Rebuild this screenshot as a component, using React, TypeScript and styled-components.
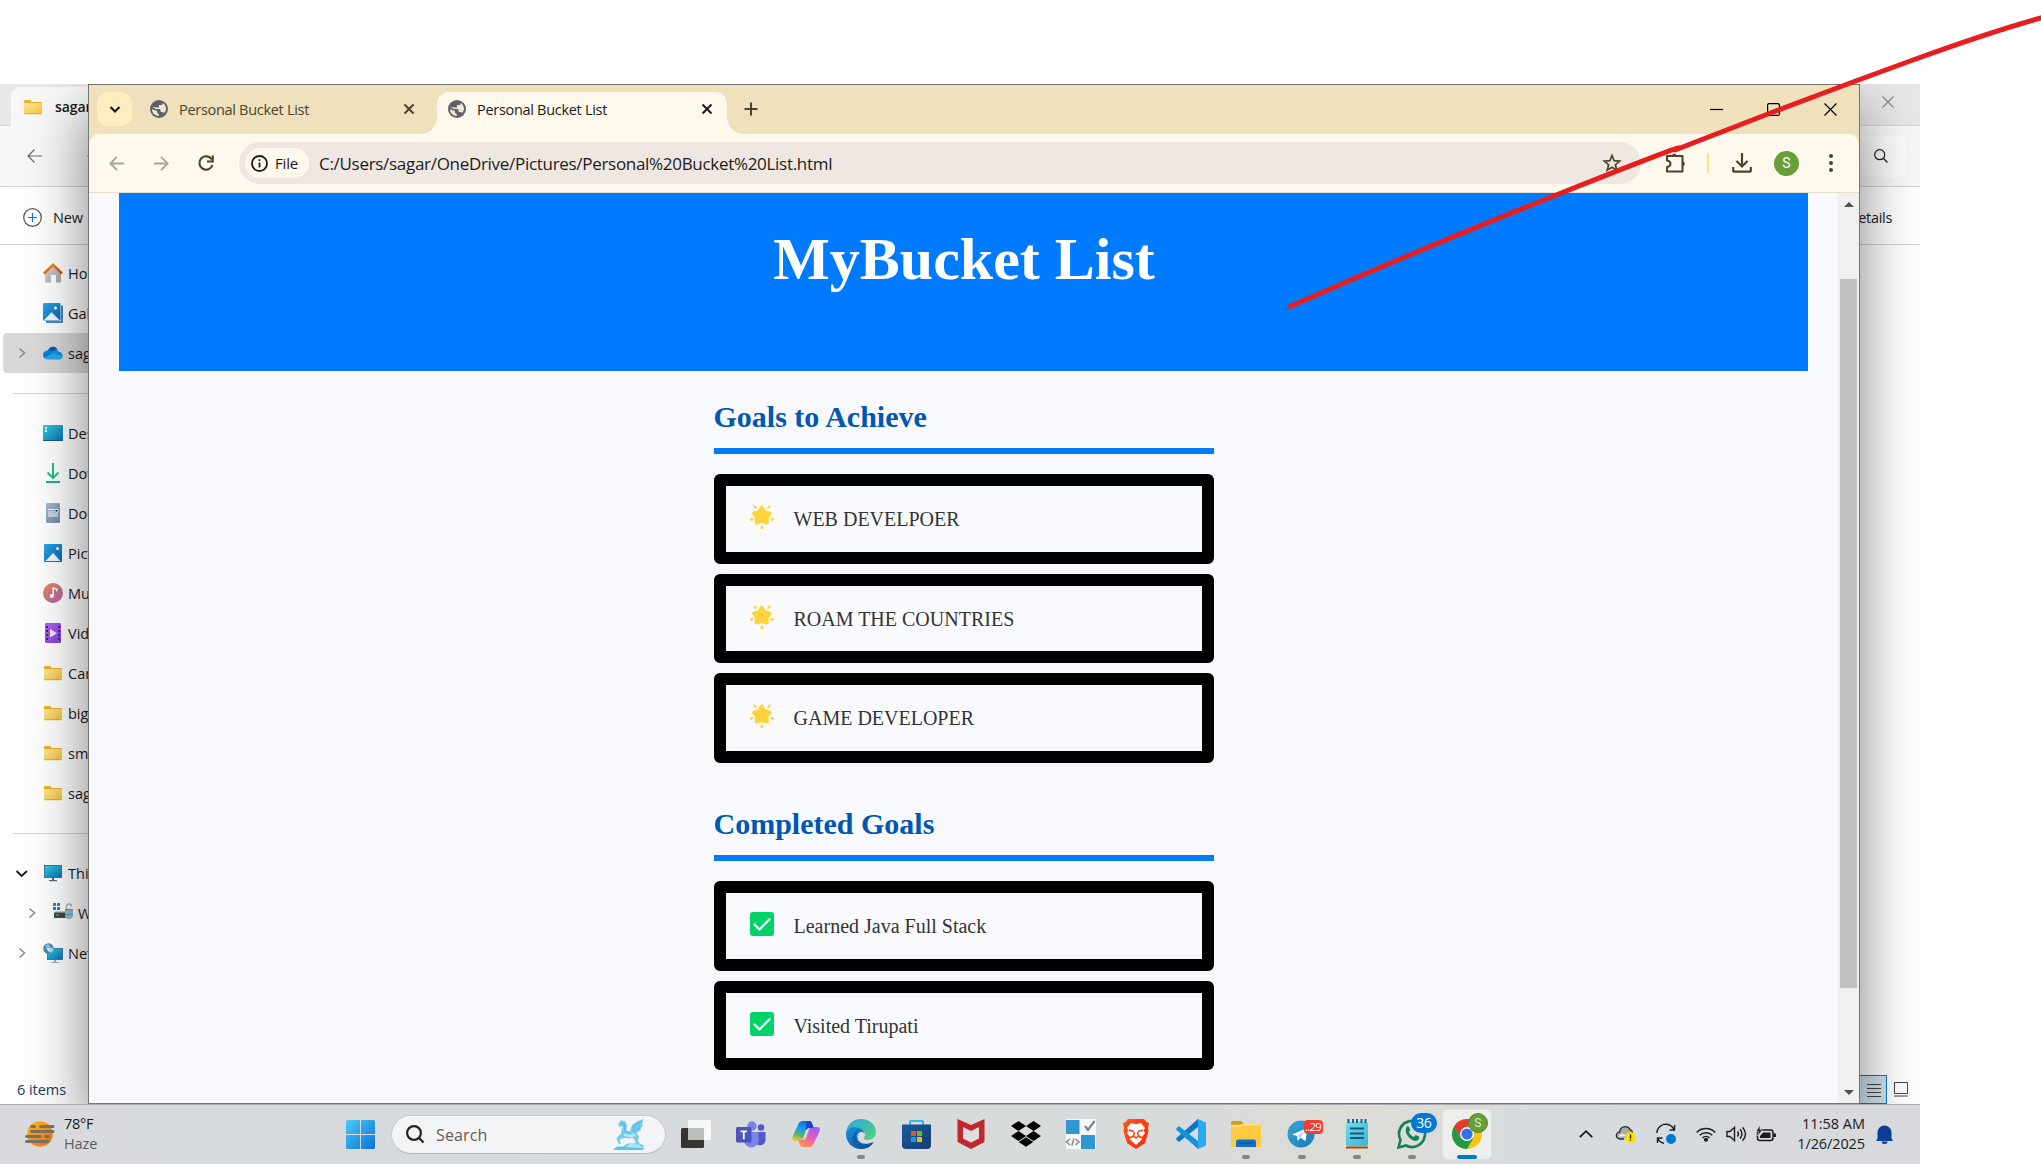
import React from "react";
import styled, { createGlobalStyle, css } from "styled-components";

const Global = createGlobalStyle`
  html, body { margin: 0; padding: 0; background: #fff; }
  body { width: 2041px; height: 1164px; overflow: hidden; font-family: "Open Sans", "Noto Sans", sans-serif; }
  * { box-sizing: border-box; }
  svg { display: block; flex: none; overflow: visible; }
`;

/* ---------- shared ---------- */
const Screen = styled.div`
  position: relative;
  width: 2041px;
  height: 1164px;
  padding-top: 84px;
  overflow: hidden;
`;
const Desktop = styled.div`
  position: relative;
  width: 1920px;
  height: 1080px;
  overflow: hidden;
  display: flex;
  flex-direction: column;
`;
const Label = styled.span<{ $size?: number; $ls?: number; $color?: string; $weight?: number }>`
  font-size: ${(p) => p.$size ?? 14.5}px;
  letter-spacing: ${(p) => p.$ls ?? -0.3}px;
  color: ${(p) => p.$color ?? "#1b1b1b"};
  font-weight: ${(p) => p.$weight ?? 400};
  line-height: 20px;
  white-space: nowrap;
`;
const Stroke = styled.svg<{ $w?: number; $c?: string }>`
  fill: none;
  stroke: ${(p) => p.$c ?? "#1b1b1b"};
  stroke-width: ${(p) => p.$w ?? 1.4};
`;

/* ---------- file explorer ---------- */
const Explorer = styled.div`
  height: 1020px;
  background: #fff;
  display: flex;
  flex-direction: column;
`;
const ExTitle = styled.div`
  height: 42px;
  background: #e8e8e8;
  border-bottom: 1px solid #d4d4d4;
  display: flex;
  justify-content: space-between;
`;
const ExTab = styled.div`
  width: 300px;
  height: 42px;
  margin: 3px 0 0 11px;
  padding: 0 0 2px 12px;
  border-radius: 9px 9px 0 0;
  background: #f8f8f8;
  display: flex;
  align-items: center;
  gap: 12px;
`;
const ExClose = styled.div`
  width: 64px;
  height: 36px;
  display: flex;
  align-items: center;
  justify-content: center;
`;
const ExNav = styled.div`
  height: 61px;
  background: #f8f8f8;
  border-bottom: 1px solid #d2d2d2;
  display: flex;
  align-items: center;
  justify-content: space-between;
  padding: 0 14px 0 27px;
`;
const ExArrows = styled.div`
  display: flex;
  gap: 45px;
`;
const ExSearch = styled.div`
  width: 300px;
  height: 41px;
  border-radius: 6px;
  background: #fdfdfd;
  display: flex;
  align-items: center;
  justify-content: flex-end;
  padding-right: 18px;
`;
const ExCommands = styled.div`
  height: 58px;
  border-bottom: 1px solid #d2d2d2;
  display: flex;
  align-items: center;
  justify-content: space-between;
  padding: 4px 28px 0 23px;
`;
const ExNew = styled.div`
  display: flex;
  align-items: center;
  gap: 11px;
`;
const ExSide = styled.div`
  flex: 1;
  width: 320px;
  padding-top: 8px;
  display: flex;
  flex-direction: column;
`;
const SideRow = styled.div<{ $on?: boolean; $in?: number }>`
  height: 40px;
  margin-left: 3px;
  padding-left: ${(p) => p.$in ?? 0}px;
  border-radius: 4px;
  display: flex;
  align-items: center;
  gap: 5px;
  ${(p) => p.$on && css`background: #d9d9d9;`}
`;
const SideText = styled(Label)`
  padding-top: 1px;
`;
const Chev = styled.div`
  width: 35px;
  height: 20px;
  display: flex;
  align-items: center;
  padding-left: 12px;
`;
const SideRule = styled.div`
  height: 40px;
  margin-left: 13px;
  display: flex;
  align-items: center;
  &::before { content: ""; flex: 1; height: 1px; background: #d5d5d5; }
`;
const ExStatus = styled.div`
  height: 29px;
  display: flex;
  align-items: center;
  justify-content: space-between;
  padding-left: 17px;
`;
const ViewButtons = styled.div`
  display: flex;
  align-items: center;
`;
const ViewButton = styled.div<{ $on?: boolean }>`
  width: ${(p) => (p.$on ? 31 : 33)}px;
  height: 29px;
  display: flex;
  align-items: center;
  padding-left: ${(p) => (p.$on ? 10 : 7)}px;
  ${(p) => p.$on && css`background: #cfe3ef; border: 1px solid #0a78c8;`}
`;

/* ---------- browser ---------- */
const Browser = styled.div`
  position: absolute;
  left: 88px;
  top: 0;
  width: 1772px;
  height: 1020px;
  border: 1px solid #757575;
  background: #fff9ed;
  box-shadow: 0 26px 56px rgba(0, 0, 0, 0.5);
  display: flex;
  flex-direction: column;
`;
const TabStrip = styled.div`
  height: 49px;
  background: #eee1bb;
  display: flex;
  align-items: flex-end;
`;
const TabMenu = styled.div`
  width: 35px;
  height: 34px;
  margin: 0 0 8px 8px;
  border-radius: 11px;
  background: #fdedc0;
  display: flex;
  align-items: center;
  justify-content: center;
`;
const Tab = styled.div<{ $active?: boolean }>`
  position: relative;
  width: ${(p) => (p.$active ? 290 : 305)}px;
  height: 42px;
  padding: 0 ${(p) => (p.$active ? 15 : 23)}px 8px ${(p) => (p.$active ? 11 : 18)}px;
  display: flex;
  align-items: center;
  gap: 11px;
  ${(p) =>
    p.$active &&
    css`
      background: #fff9ed;
      border-radius: 12px 12px 0 0;
      &::before, &::after {
        content: "";
        position: absolute;
        bottom: 0;
        width: 16px;
        height: 16px;
      }
      &::before { left: -16px; background: radial-gradient(circle at 0 0, #eee1bb 15.5px, #fff9ed 16px); }
      &::after { right: -16px; background: radial-gradient(circle at 100% 0, #eee1bb 15.5px, #fff9ed 16px); }
    `}
`;
const TabTitle = styled(Label)`
  flex: 1;
  padding-top: 1px;
`;
const NewTab = styled.div`
  margin: 0 0 18px 17px;
`;
const Caption = styled.div`
  margin: 0 22px 18px auto;
  display: flex;
  gap: 44px;
  align-items: center;
`;
const ToolbarBack = styled.div`
  background: #eee1bb;
`;
const Toolbar = styled.div`
  height: 59px;
  background: #fff9ed;
  border-bottom: 1px solid #eadfca;
  border-radius: 11px 11px 0 0;
  display: flex;
  align-items: center;
  padding: 0 22px 0 20px;
`;
const NavGroup = styled.div`
  display: flex;
  gap: 29.5px;
  width: 130px;
  align-items: center;
`;
const Omnibox = styled.div`
  width: 1402px;
  height: 42px;
  border-radius: 21px;
  background: #efe8e2;
  padding: 0 19px 0 6px;
  display: flex;
  align-items: center;
`;
const Chip = styled.div`
  width: 64px;
  height: 30px;
  border-radius: 15px;
  background: #fff9ed;
  display: flex;
  align-items: center;
  gap: 7px;
  padding-left: 6px;
  margin-right: 10px;
`;
const Url = styled(Label)`
  flex: 1;
  padding-top: 1px;
`;
const Actions = styled.div`
  flex: 1;
  display: flex;
  align-items: center;
  padding-left: 24px;
`;
const Divider = styled.div`
  width: 2px;
  height: 20px;
  background: #fbe283;
  margin: 0 23px 0 20px;
`;
const Avatar = styled.div`
  width: 25px;
  height: 25px;
  margin: 0 30px 0 22px;
  border-radius: 50%;
  background: #689f38;
  color: #fff;
  font: 14px/25px Roboto, sans-serif;
  text-align: center;
`;

const Viewport = styled.div`
  flex: 1;
  display: flex;
  background: #f8f9fc;
  min-height: 0;
`;
const PageBody = styled.div`
  flex: 1;
  padding: 0 30px;
  display: flex;
  flex-direction: column;
  align-items: center;
  font-family: "Liberation Serif", "Times New Roman", serif;
`;
const Hero = styled.div`
  width: 100%;
  height: 178px;
  background: #007bff;
  display: flex;
  justify-content: center;
  padding: 31px 0 0 1px;
`;
const HeroTitle = styled.h1`
  margin: 0;
  font-size: 60px;
  line-height: 70px;
  font-weight: 700;
  color: #fff;
`;
const Section = styled.section`
  width: 500px;
  height: 407px;
  padding-top: 27px;
  &:last-child { height: auto; }
`;
const SectionTitle = styled.h2`
  margin: 0 0 20.25px;
  height: 56px;
  border-bottom: 6px solid #007bff;
  font-size: 30px;
  line-height: 38px;
  font-weight: 700;
  color: #0056b3;
`;
const Goal = styled.div`
  height: 89.5px;
  margin-bottom: 10px;
  border: 12px solid #000;
  border-radius: 6px;
  background: #f9fafd;
  display: flex;
  padding: 19px 24px 0;
  gap: 20px;
`;
const GoalText = styled.span`
  margin-top: 1px;
  font-size: 20px;
  line-height: 27px;
  color: #333;
`;

const Scroll = styled.div`
  width: 21px;
  background: #f0f0f1;
  display: flex;
  flex-direction: column;
  align-items: center;
  justify-content: space-between;
  padding: 9px 0 8px;
`;
const Thumb = styled.div`
  width: 17px;
  height: 709px;
  margin: 72px 0 auto;
  background: #c1c1c1;
`;

/* ---------- taskbar ---------- */
const Taskbar = styled.div`
  position: relative;
  height: 60px;
  border-top: 1px solid #a8a9ab;
  background: linear-gradient(90deg, #d8dadd 0%, #d7dbdd 45%, #d8dbdb 62%, #dedcd5 71%, #d7dbdf 80%, #d8d9dc 100%);
  display: flex;
  align-items: center;
  padding-bottom: 1px;
`;
const Weather = styled.div`
  width: 321px;
  margin-left: 25px;
  display: flex;
  align-items: center;
  gap: 9px;
`;
const Stack = styled.div<{ $right?: boolean }>`
  display: flex;
  flex-direction: column;
  text-align: ${(p) => (p.$right ? "right" : "left")};
`;
const SearchPill = styled.div`
  width: 275px;
  height: 39px;
  margin: 0 2px 0 16px;
  padding: 0 21px 0 14px;
  border: 1px solid #c8cacb;
  border-bottom-color: #b4b6b8;
  border-radius: 20px;
  background: #f3f4f5;
  display: flex;
  align-items: center;
  gap: 12px;
`;
const PillText = styled(Label)`
  flex: 1;
  padding-top: 1px;
`;
const Apps = styled.div`
  display: grid;
  grid-template-columns: repeat(15, 55.1px);
`;
const AppButton = styled.div<{ $on?: boolean }>`
  position: relative;
  justify-self: center;
  width: 48px;
  height: 49px;
  border-radius: 5px;
  display: flex;
  align-items: center;
  justify-content: center;
  padding-bottom: 1px;
  ${(p) => p.$on && css`background: #eeeeed; box-shadow: 0 0 0 1px #e2e2e0;`}
`;
const Running = styled.i<{ $on?: boolean }>`
  position: absolute;
  bottom: 0;
  left: ${(p) => (p.$on ? 14 : 20)}px;
  width: ${(p) => (p.$on ? 20 : 8)}px;
  height: 4px;
  border-radius: 2px;
  background: ${(p) => (p.$on ? "#0078d4" : "#858585")};
`;
const Badge = styled.b<{ $kind: "tg" | "wa" | "ch" }>`
  position: absolute;
  font-weight: 400;
  color: #fff;
  text-align: center;
  ${(p) =>
    p.$kind === "tg" &&
    css`left: 26px; top: 10px; width: 19px; height: 14px; border-radius: 4px; background: #f23c34; font-size: 11.5px; line-height: 14px; letter-spacing: -0.8px;`}
  ${(p) =>
    p.$kind === "wa" &&
    css`left: 23px; top: 3px; width: 26px; height: 20px; border-radius: 10px; background: #0078d4; font-size: 14px; line-height: 20px; letter-spacing: -0.6px;`}
  ${(p) =>
    p.$kind === "ch" &&
    css`left: 25px; top: 3px; width: 20px; height: 20px; border-radius: 10px; background: #689f38; border: 1px solid #57852f; color: #dce9c8; font: 12px/18px Roboto, sans-serif;`}
`;
const Tray = styled.div`
  margin-left: auto;
  padding-right: 27px;
  display: flex;
  align-items: center;
`;
const TraySlot = styled.div<{ $w: number }>`
  width: ${(p) => p.$w}px;
  height: 24px;
  display: flex;
  align-items: center;
  justify-content: center;
`;
const Clock = styled(Stack)`
  width: 79px;
  margin-right: 11px;
  align-items: flex-end;
`;

const Ink = styled.svg`
  position: absolute;
  left: 0;
  top: 0;
  pointer-events: none;
`;
const HiddenDefs = styled.svg`
  position: absolute;
  width: 0;
  height: 0;
`;

/* ---------- icons ---------- */
const Defs = () => (
  <HiddenDefs>
    <defs>
      {[
        ["fold", "#fde79a", "#f8c43c"],
        ["blue", "#2fa8e8", "#0a62b8"],
        ["teal", "#2fd4dc", "#0d6dbb"],
        ["grey", "#d8d8d8", "#a5a5a5"],
        ["roof", "#f79423", "#d34b12"],
        ["doc", "#a9bed2", "#6c88a6"],
        ["music", "#f08a52", "#a763b8"],
        ["video", "#b266f2", "#8040d8"],
        ["sun", "#fdb813", "#ef6c0a"],
        ["win", "#4cc8f8", "#0a74d4"],
        ["store", "#145a9c", "#1b3e6f"],
        ["edge1", "#2ea5e8", "#55d672"],
        ["edge2", "#1c8fdc", "#0f4f9c"],
        ["brave", "#ff5a1c", "#ff2000"],
        ["tg", "#35a8dc", "#1878b4"],
        ["note", "#74dbee", "#38b4d4"],
      ].map(([id, a, b]) => (
        <linearGradient key={id} id={id} x1="0" y1="0" x2="1" y2="1">
          <stop offset="0" stopColor={a} />
          <stop offset="1" stopColor={b} />
        </linearGradient>
      ))}
      <linearGradient id="cop1" x1="0.6" y1="0" x2="0.3" y2="1">
        <stop offset="0" stopColor="#1c64e4" />
        <stop offset="0.4" stopColor="#1a9ee8" />
        <stop offset="0.7" stopColor="#4cb870" />
        <stop offset="1" stopColor="#f0c83c" />
      </linearGradient>
      <linearGradient id="cop2" x1="0.7" y1="0" x2="0.3" y2="1">
        <stop offset="0" stopColor="#a45cf0" />
        <stop offset="0.5" stopColor="#e85cb4" />
        <stop offset="1" stopColor="#ff9450" />
      </linearGradient>
    </defs>
  </HiddenDefs>
);

const I = ({ w = 20, h = 20, children }: { w?: number; h?: number; children: React.ReactNode }) => (
  <svg width={w} height={h} viewBox={`0 0 ${w} ${h}`}>{children}</svg>
);
const Folder = () => (
  <I>
    <path d="M1 4a1 1 0 0 1 1-1h5.500l1.300 2H18a1 1 0 0 1 1 1V9H1z" fill="#f0b21f" />
    <rect x="1" y="6" width="18" height="10.800" rx=".8" fill="url(#fold)" />
    <path d="M1.400 16.700h17.200" stroke="#e3a41c" strokeWidth="1" />
  </I>
);
const Home = () => (
  <I>
    <path d="M2 9 10 2l8 7v9.500a1 1 0 0 1-1 1h-4V12H8v7.500H2.500L2 18z" fill="url(#grey)" />
    <path d="M1 10.500 10 1.800l9 8.700" fill="none" stroke="url(#roof)" strokeWidth="2.600" />
  </I>
);
const Gallery = () => (
  <I>
    <path d="M3 19h16V2.500" fill="none" stroke="#1564b0" strokeWidth="1.600" />
    <rect width="17.500" height="17.500" rx="1.200" fill="url(#blue)" />
    <path d="m1 17 7.500-7.800L16.500 17z" fill="#eef6fd" />
    <circle cx="12.500" cy="5" r="1.500" fill="#fff" />
  </I>
);
const OneDrive = () => (
  <I>
    <path d="M5 8a5 5 0 0 1 9.500-1.500L11 12H3z" fill="#0a5cb0" />
    <path d="M4.500 7.500a4.500 4.500 0 0 0-2.700 8L12 10.500 7.500 7.800z" fill="#1180d8" />
    <path d="M13 7a4.500 4.500 0 0 1 3 1.700 4 4 0 0 1 3.500 5L12 12l-4-3z" fill="#1490df" />
    <path d="m10 10 9.600 3.500A3.500 3.500 0 0 1 16 16.500H4.500a4.500 4.500 0 0 1-3-1.500z" fill="#28a8ea" />
  </I>
);
const DesktopIcon = () => (
  <I>
    <rect y="2" width="20" height="16" rx="1" fill="url(#teal)" />
    <path d="M0 17h20v.600H0z" fill="#0b3f74" />
    <path d="M2 4h2v2H2zM2 7h2v2H2z" fill="#fff" />
  </I>
);
const DownloadIcon = () => (
  <I>
    <path d="M10 0v15M4.500 9.500 10 15l5.500-5.500" fill="none" stroke="#25bd8d" strokeWidth="2" />
    <path d="M3 18h14v2H3z" fill="#1db092" />
  </I>
);
const DocIcon = () => (
  <I>
    <rect x="3" width="14" height="20" rx="1.200" fill="url(#doc)" />
    <path d="M5 6.500h6M5 9h6M5 11h10M5 13h10M12 6.500h3v2.500h-3z" stroke="#fff" strokeWidth="1" />
  </I>
);
const PicIcon = () => (
  <I>
    <rect x="1" y="1" width="18" height="18" rx="1" fill="url(#blue)" />
    <path d="m2.500 18 7.500-8 7.500 8z" fill="#eef6fd" />
    <circle cx="14.500" cy="5.500" r="1.500" fill="#fff" />
  </I>
);
const MusicIcon = () => (
  <I>
    <circle cx="10" cy="10" r="10" fill="url(#music)" />
    <circle cx="8.800" cy="13" r="2.100" fill="#fff" />
    <path d="M10.200 13V5l3.500 1v2.200" fill="none" stroke="#fff" strokeWidth="1.500" />
  </I>
);
const VideoIcon = () => (
  <I>
    <rect x="2" width="16" height="20" rx="1.200" fill="url(#video)" />
    <path d="M4 3v15M16 3v15" stroke="#43237a" strokeWidth="2" strokeDasharray="2 2" />
    <path d="M7 6v8.500l7-4.250z" fill="#f0eaf8" />
  </I>
);
const PcIcon = () => (
  <I>
    <rect x="1.400" y="2.400" width="17.200" height="12.200" fill="url(#teal)" stroke="#2a6690" strokeWidth=".8" />
    <path d="M9 15h2v2H9zM6 17h8v1.200H6z" fill="#5d6b78" />
  </I>
);
const DriveIcon = () => (
  <I>
    <path d="M0 0h3v3H0zM4 0h3v3H4zM0 4h3v3H0zM4 4h3v3H4z" fill="#1689d8" />
    <path d="M2 8h16v2H2z" fill="#d0d0d0" />
    <rect x="1" y="9.500" width="14" height="5.500" fill="#474747" />
    <circle cx="4.500" cy="12" r="1" fill="#44d860" />
    <path d="M13.500 6V3.500a2.500 2.500 0 0 1 5 0" fill="none" stroke="#a9b2bb" strokeWidth="1.400" />
    <path d="M12 6h8v6a4 4 0 0 1-8 0z" fill="#a6b5c4" />
    <path d="M12 6.500h8M12 11.500h8" stroke="#3aa0e0" />
  </I>
);
const NetIcon = () => (
  <I>
    <rect x="4.500" y="5.500" width="15" height="11" fill="url(#teal)" stroke="#1c6fa8" strokeWidth=".8" />
    <path d="M11 17h2v2h-2zM8 19h8v1H8z" fill="#a0aab2" />
    <circle cx="5.500" cy="5.500" r="5.300" fill="#4a90b8" />
    <path d="M2 3q3-3 5 0L5 7l3 3q3-1 2-5" fill="#a8d4e8" />
    <path d="m3 4 3 1 1 4-2-1z" fill="#e8f6fc" />
  </I>
);
const Globe = () => (
  <svg width="18" height="18" viewBox="0 0 18 18">
    <circle cx="9" cy="9" r="9" fill="#5f6368" />
    <path d="M2 9.300c0 3.800 3 6.700 6.800 6.700v-2.200c-1 0-1.800-.8-1.800-1.800v-.9L2 9.300zM2.300 7l3.400 2h3.200c1 0 1.700.7 1.700 1.600v1.500h1.600c.8 0 1.500.5 1.700 1.200A7 7 0 0 0 16 9c0-2.500-1.300-4.700-3.300-5.900V3.400c0 1-.8 1.700-1.800 1.700H9v1.600c0 .5-.4.900-.9.900H6.400z" fill="#eee8d6" />
  </svg>
);
const Cross = ({ c = "#1b1b1b", s = 10, w = 2 }: { c?: string; s?: number; w?: number }) => (
  <Stroke width={s} height={s} $w={w} $c={c}><path d={`M.5.5 ${s - 0.5} ${s - 0.5}M${s - 0.5} .5.5 ${s - 0.5}`} /></Stroke>
);
const Star = () => (
  <svg width="24" height="24" viewBox="0 0 24 24" fill="#ffd43b">
    <path d="m11.800 2 2.900 4.800 5.300 1.500-2.900 4.200.2 5.600-5.500-1.500-5.500 1.500.2-5.600L3.600 8.300l5.300-1.500z" stroke="#ffd43b" strokeWidth="3" strokeLinejoin="round" />
    <path d="M3.300.6q2.400-.8 3.100 1.400l.2 2.200q-3.100-.6-3.300-3.600zM20.700.6q-2.400-.8-3.100 1.400l-.2 2.200q3.100-.6 3.300-3.600zM0 14q.2-1.300 1.900-1l1.900.5q-.6 2.300-2.300 2.700Q0 16 0 14zM24 14q-.2-1.300-1.900-1l-1.900.5q.6 2.300 2.300 2.700Q24 16 24 14zM12 19.800l1.600 2.600q.2 1.600-1.600 1.600t-1.600-1.600z" />
  </svg>
);
const Check = () => (
  <svg width="24" height="24" viewBox="0 0 24 24">
    <rect width="24" height="24" rx="3" fill="#00d26a" />
    <path d="m4.500 12.500 5 5L19.500 7.300" fill="none" stroke="#fff" strokeWidth="2.300" strokeLinecap="round" strokeLinejoin="round" />
  </svg>
);

/* ---------- data ---------- */
type Row = { icon: React.ReactNode; text: string; chev?: "right" | "down"; on?: boolean; inset?: number } | null;
const rows: Row[] = [
  { icon: <Home />, text: "Home" },
  { icon: <Gallery />, text: "Gallery" },
  { icon: <OneDrive />, text: "sagar - Personal", chev: "right", on: true },
  null,
  { icon: <DesktopIcon />, text: "Desktop" },
  { icon: <DownloadIcon />, text: "Downloads" },
  { icon: <DocIcon />, text: "Documents" },
  { icon: <PicIcon />, text: "Pictures" },
  { icon: <MusicIcon />, text: "Music" },
  { icon: <VideoIcon />, text: "Videos" },
  { icon: <Folder />, text: "Camera" },
  { icon: <Folder />, text: "big" },
  { icon: <Folder />, text: "small" },
  { icon: <Folder />, text: "sagar" },
  null,
  { icon: <PcIcon />, text: "This PC", chev: "down" },
  { icon: <DriveIcon />, text: "Windows (C:)", chev: "right", inset: 10 },
  { icon: <NetIcon />, text: "Network", chev: "right" },
];

type AppEntry = { icon: React.ReactNode; run?: boolean; on?: boolean; badge?: ["tg" | "wa" | "ch", string] };
const apps: AppEntry[] = [
  {
    icon: (
      <I w={30} h={30}>
        <rect x="0" y="9" width="23" height="20" rx="1.500" fill="#353431" />
        <rect x="7" y="1" width="23" height="20" rx="1.500" fill="#fafafa" opacity=".93" />
        <path d="M7 9h16v12H7z" fill="#bdbdbc" />
      </I>
    ),
  },
  {
    icon: (
      <I w={30} h={30}>
        <circle cx="25" cy="8.500" r="3.300" fill="#4f58c8" />
        <circle cx="16" cy="7" r="4.700" fill="#7b83eb" />
        <path d="M20 13h9.500v8a5.500 5.500 0 0 1-9 4z" fill="#5059c9" />
        <path d="M8 13h14.500v9a7.300 7.300 0 0 1-14.500 0z" fill="#7b83eb" />
        <rect y="8" width="15.500" height="15.500" rx="1.500" fill="#4b53bc" />
        <path d="M4.500 12.300h6.500M7.750 12.300v8" stroke="#fff" strokeWidth="1.800" />
      </I>
    ),
  },
  {
    icon: (
      <I w={28} h={26}>
        <path d="M6 4q1.200-4 5-4h6q2.500 0 3.200 2.500L21.500 7H17q-2.500 0-3.300 2.800L11 17.500Q10 20 7.500 20H3.500Q-1 20 .5 15.500 4 8 6 4z" fill="url(#cop1)" />
        <path d="M22 22q-1.200 4-5 4h-6q-2.500 0-3.200-2.500L6.500 19H11q2.500 0 3.300-2.800L17 8.500Q18 6 20.500 6h4q4.500 0 3 4.500Q24 18 22 22z" fill="url(#cop2)" />
        <path d="M14.500 1 17 0q2.500 0 3.200 2.500L21.500 7H17q-2 0-3.200 2z" fill="#1848c8" />
      </I>
    ),
  },
  {
    run: true,
    icon: (
      <I w={30} h={30}>
        <path d="M0 14C1 5 7 0 15 0c9 0 15 6 15 13 0 5-4 8-8.500 8-3 0-4.500-1-3.500-2.500 3-3.500 0-8-5-8.500C7 9.500 1 11 0 14z" fill="url(#edge1)" />
        <path d="M0 14C1.500 8.500 8 7 13 9c3.500 1.200 5.500 3.500 5.800 6-1.500-2.800-6.500-2.500-7.300 1.500-1 6 5 11 16 6.500C25 28 20 30 15 30 6 30-.5 23 0 14z" fill="url(#edge2)" />
        <path d="M12 11q-4 6 0 12 5 6 15.500 0-4 7-12 7-9-2-9-10 0-6 5.500-9z" fill="#0c5aa4" opacity=".7" />
        <path d="M18.800 15.500q0 2-1 3.200-1 1-5-1.500-1-3.500 2-4.200 3.500 0 4 2.500z" fill="#d9dcde" />
      </I>
    ),
  },
  {
    icon: (
      <I w={30} h={30}>
        <path d="M9 6V3a1 1 0 0 1 1-1h11a1 1 0 0 1 1 1v3" fill="none" stroke="#2fb4ec" strokeWidth="2" />
        <path d="M1 5.500h29V26a4 4 0 0 1-4 4H5a4 4 0 0 1-4-4z" fill="url(#store)" />
        <path d="M10 12h5v5h-5z" fill="#f25022" /><path d="M16 12h5v5h-5z" fill="#7fba00" />
        <path d="M10 18h5v5h-5z" fill="#00a4ef" /><path d="M16 18h5v5h-5z" fill="#ffb900" />
      </I>
    ),
  },
  {
    icon: (
      <I w={28} h={30}>
        <path d="m.5 0 13.500 6L27.500 0v23L14 30 .5 23z" fill="#c1272d" />
        <path d="m6 8 8 4 8-4v11.500l-8 4-8-4z" fill="#dcdedf" />
      </I>
    ),
  },
  {
    icon: (
      <I w={30} h={26}>
        <path d="m7.500 0 7.500 5-7.500 5L0 5zM22.500 0 30 5l-7.500 5L15 5zM7.500 10l7.500 5-7.500 5L0 15zM22.500 10l7.500 5-7.500 5-7.500-5zM15 16.300l7.300 4.700L15 25.800 7.700 21z" fill="#000" />
      </I>
    ),
  },
  {
    icon: (
      <I w={30} h={30}>
        <path d="M0 0h30v30H0z" fill="#f6f7f8" />
        <path d="M0 1h13.500v14H0zM15 16h14v14H15z" fill="#3198cf" />
        <path d="m19 7 3 4L28.500 2" fill="none" stroke="#7d8286" strokeWidth="2.200" />
        <path d="m4 20-3.500 3L4 26m5.500-6 3.500 3-3.500 3M8 19.500l-2.200 7" fill="none" stroke="#8d9296" strokeWidth="1.600" />
      </I>
    ),
  },
  {
    icon: (
      <I w={26} h={30}>
        <path d="m5 0h16l2.500 3L26 4l-1 5 .5 3-3.500 12-9 6-9-6L.5 12 1 9 0 4l2.500-1z" fill="url(#brave)" />
        <path d="m8 4 5 1.200L18 4l4 5-1.500 2.500L22 14l-3 4-2.500-1.500-1.500 1 1.500 1 3 1.500-6.500 6-6.500-6 3-1.500 1.500-1-1.500-1L7 18l-3-4 1.500-2.500L4 9z" fill="#fff" />
        <path d="m6 11 5 1.500M20 11l-5 1.500M11.500 13l-1 4 2.500 2 2.500-2-1-4" fill="none" stroke="#ff3c10" strokeWidth="1.500" />
      </I>
    ),
  },
  {
    icon: (
      <I w={30} h={30}>
        <path d="M22 0v8L3.500 22.500Q2.500 23 1.800 22L.5 20.700q-.8-1 0-1.700z" fill="#0a78c4" />
        <path d="M22 30v-8L3.500 7.500Q2.500 7 1.800 8L.5 9.300q-.8 1 0 1.700z" fill="#1592dc" />
        <path d="M22 0l8 3.500v23L22 30q-1 0-1.500-1 1.500.5 1.500-1V2q0-1.500-1.500-1z" fill="#2aa8f0" />
      </I>
    ),
  },
  {
    run: true,
    icon: (
      <I w={30} h={28}>
        <path d="M0 2.500A1.500 1.500 0 0 1 1.500 1H10l3 3v3H0z" fill="#d89a16" />
        <rect y="4.500" width="30" height="22.500" rx="1" fill="#fccb3f" />
        <path d="M0 5.500h8.500L12 4h18v1.500H13L9.500 7H0z" fill="#fde08a" />
        <path d="M5 27v-5.500a2 2 0 0 1 2-2h16a2 2 0 0 1 2 2V27z" fill="#0f70c8" />
        <path d="M8 23.200h14" stroke="#0b4f98" strokeWidth="1.300" />
      </I>
    ),
  },
  {
    run: true,
    badge: ["tg", "..29"],
    icon: (
      <I w={30} h={30}>
        <circle cx="14" cy="15" r="13.500" fill="url(#tg)" />
        <path d="m5 15.500 15.500-6.500-2 13-5-3.200-2.800 3.200-.7-5z" fill="#fff" />
        <path d="m10 17 8-5.500-4.500 7.300z" fill="#b8d8ea" />
      </I>
    ),
  },
  {
    run: true,
    icon: (
      <I w={22} h={30}>
        <rect y="3" width="22" height="24" rx="2" fill="url(#note)" />
        <path d="M0 28.500h22" stroke="#a3480e" strokeWidth="2" />
        <path d="M4 9.500h14M4 14.500h14M4 19h14" stroke="#155a78" strokeWidth="1.800" />
        <path d="M2.500 0v4M7 0v4M11 0v4M15.500 0v4M19.500 0v4" stroke="#1d6480" strokeWidth="2" />
      </I>
    ),
  },
  {
    run: true,
    badge: ["wa", "36"],
    icon: (
      <I w={30} h={30}>
        <path d="M1.500 28.500 3.500 21A13 13 0 1 1 9 26.500z" fill="none" stroke="#12805c" strokeWidth="2.600" />
        <path d="M9.500 8q1-1.500 2.500 0l1.300 3-1.500 2q1.500 3.500 5 5l2-2 3.200 1.500q1 1.500-1 3.500-3.500 2.500-8.500-2-5.500-5.500-3-11z" fill="#12805c" />
      </I>
    ),
  },
  {
    run: true,
    on: true,
    badge: ["ch", "S"],
    icon: (
      <I w={30} h={30}>
        <circle cx="15" cy="15" r="15" fill="#fbc116" />
        <path d="M2 7.500A15 15 0 0 1 28 7.500H15L8.500 18.800z" fill="#e33b2e" />
        <path d="M2 7.500A15 15 0 0 0 15 30l6.500-11.200H8.500z" fill="#229944" />
        <circle cx="15" cy="15" r="7" fill="#fff" />
        <circle cx="15" cy="15" r="5.600" fill="#2f74e8" />
      </I>
    ),
  },
];

const goals = [
  { title: "Goals to Achieve", icon: <Star />, items: ["WEB DEVELPOER", "ROAM THE COUNTRIES", "GAME DEVELOPER"] },
  { title: "Completed Goals", icon: <Check />, items: ["Learned Java Full Stack", "Visited Tirupati"] },
];

/* ---------- windows ---------- */
const ExplorerWindow = () => (
  <Explorer>
    <ExTitle>
      <ExTab>
        <Folder />
        <Label $weight={600} $size={14} $ls={-0.1}>sagar</Label>
      </ExTab>
      <ExClose><Cross c="#8a8a8a" s={12} w={1.2} /></ExClose>
    </ExTitle>
    <ExNav>
      <ExArrows>
        <Stroke width="15" height="14" $w={1.2} $c="#6a6a6a"><path d="M15 7H1M7.500.5 1 7l6.500 6.500" /></Stroke>
        <Stroke width="15" height="14" $w={1.2} $c="#9a9a9a"><path d="M0 7h14M7.500.5 14 7l-6.500 6.500" /></Stroke>
      </ExArrows>
      <ExSearch>
        <Stroke width="14" height="14" $w={1.2}><circle cx="5.700" cy="5.700" r="5" /><path d="m9.500 9.500 4 4" /></Stroke>
      </ExSearch>
    </ExNav>
    <ExCommands>
      <ExNew>
        <Stroke width="19" height="19" $w={1.2} $c="#555"><circle cx="9.500" cy="9.500" r="8.800" /><path d="M9.500 5v9M5 9.500h9" stroke="#0a78d4" /></Stroke>
        <Label $ls={-0.1}>New</Label>
      </ExNew>
      <Label>Details</Label>
    </ExCommands>
    <ExSide>
      {rows.map((r, i) =>
        r ? (
          <SideRow key={i} $on={r.on} $in={r.inset}>
            <Chev>
              {r.chev === "right" && <Stroke width="12" height="12" $w={1.5} $c="#8b8b8b"><path d="m4.500 1.500 5 4.500-5 4.500" /></Stroke>}
              {r.chev === "down" && <Stroke width="12" height="12" $w={1.8}><path d="M1.500 4 6.700 9l5.200-5" /></Stroke>}
            </Chev>
            {r.icon}
            <SideText $ls={0}>{r.text}</SideText>
          </SideRow>
        ) : (
          <SideRule key={i} />
        )
      )}
    </ExSide>
    <ExStatus>
      <Label $color="#1e395b" $ls={-0.05}>6 items</Label>
      <ViewButtons>
        <ViewButton $on>
          <Stroke width="14" height="14" $w={1} $c="#444"><path d="M0 1.500h14M0 5.500h14M0 9.500h14M0 13.500h14" /></Stroke>
        </ViewButton>
        <ViewButton>
          <Stroke width="14" height="15" $w={1} $c="#444"><path d="M.5.5h13v11H.5zM0 14h14" /></Stroke>
        </ViewButton>
      </ViewButtons>
    </ExStatus>
  </Explorer>
);

const BrowserWindow = () => (
  <Browser>
    <TabStrip>
      <TabMenu><Stroke width="10" height="7" $w={2.2}><path d="m.5 1 4.500 4.500L9.500 1" /></Stroke></TabMenu>
      <Tab>
        <Globe /><TabTitle $color="#4b432c">Personal Bucket List</TabTitle><Cross c="#4b432c" />
      </Tab>
      <Tab $active>
        <Globe /><TabTitle>Personal Bucket List</TabTitle><Cross />
      </Tab>
      <NewTab><Stroke width="14" height="14" $w={2} $c="#4b432c"><path d="M7 .5v13M.5 7h13" /></Stroke></NewTab>
      <Caption>
        <Stroke width="13" height="13" $w={1.2} $c="#000"><path d="M0 6.500h13" /></Stroke>
        <Stroke width="13" height="13" $w={1.2} $c="#000"><rect x=".6" y=".6" width="11.800" height="11.800" rx="1.500" /></Stroke>
        <Cross c="#000" s={13} w={1.2} />
      </Caption>
    </TabStrip>
    <ToolbarBack>
      <Toolbar>
        <NavGroup>
          <Stroke width="15" height="15" $w={1.8} $c="#aaa594"><path d="M15 7.500H1.500M8 .8 1.300 7.500 8 14.200" /></Stroke>
          <Stroke width="15" height="15" $w={1.8} $c="#aaa594"><path d="M0 7.500h13.500M7 .8l6.700 6.700L7 14.200" /></Stroke>
          <Stroke width="16" height="16" $w={2.1} $c="#4b432c">
            <path d="M13.800 4.500A6.700 6.700 0 1 0 14.500 10" /><path d="M14.800.5v6H9" />
          </Stroke>
        </NavGroup>
        <Omnibox>
          <Chip>
            <Stroke width="17" height="17" $w={1.8}><circle cx="8.500" cy="8.500" r="7.500" /><path d="M8.500 7.500v5M8.500 4.300v1.800" /></Stroke>
            <Label $weight={500} $size={15} $ls={-0.2}>File</Label>
          </Chip>
          <Url $size={17} $ls={-0.3}>C:/Users/sagar/OneDrive/Pictures/Personal%20Bucket%20List.html</Url>
          <Stroke width="20" height="20" $w={1.7} $c="#4b432c">
            <path d="m10 2.500 2.100 5.200 5.600.4-4.300 3.600 1.400 5.500-4.800-3-4.800 3 1.400-5.500L2.300 8.100l5.600-.4z" />
          </Stroke>
        </Omnibox>
        <Actions>
          <Stroke width="22" height="22" $w={2} $c="#4b432c">
            <path d="M2 4h15.500v15.500H2v-4.500q3.500-.5 3.500-3.200T2 8.500z" strokeLinejoin="round" />
            <path d="M7 4a2.300 2.300 0 0 1 4.600 0zM17.500 9.500a2.300 2.300 0 0 1 0 4.600z" fill="#4b432c" stroke="none" />
          </Stroke>
          <Divider />
          <Stroke width="20" height="20" $w={2.2} $c="#4b432c">
            <path d="M10 0v13M4.500 8 10 13.500 15.500 8M1.200 14v3.500a1.200 1.200 0 0 0 1.200 1.200h15.200a1.200 1.200 0 0 0 1.200-1.200V14" />
          </Stroke>
          <Avatar>S</Avatar>
          <svg width="4" height="18" fill="#4b432c"><circle cx="2" cy="2" r="2" /><circle cx="2" cy="9" r="2" /><circle cx="2" cy="16" r="2" /></svg>
        </Actions>
      </Toolbar>
    </ToolbarBack>
    <Viewport>
      <PageBody>
        <Hero><HeroTitle>MyBucket List</HeroTitle></Hero>
        {goals.map((g) => (
          <Section key={g.title}>
            <SectionTitle>{g.title}</SectionTitle>
            {g.items.map((t) => (
              <Goal key={t}>{g.icon}<GoalText>{t}</GoalText></Goal>
            ))}
          </Section>
        ))}
      </PageBody>
      <Scroll>
        <svg width="10" height="5" fill="#505050"><path d="M0 5h10L5 0z" /></svg>
        <Thumb />
        <svg width="10" height="5" fill="#505050"><path d="M0 0h10L5 5z" /></svg>
      </Scroll>
    </Viewport>
  </Browser>
);

const TaskbarStrip = () => (
  <Taskbar>
    <Weather>
      <I w={30} h={26}>
        <circle cx="15" cy="13" r="12.800" fill="url(#sun)" />
        <path d="M6.500 5.500h3M15.500 5.500H28M6.500 10.500H28M1.500 15.500H15M20.500 15.500h3M1.500 20.500H23" stroke="#77706a" strokeWidth="3" strokeLinecap="round" />
      </I>
      <Stack><Label>78°F</Label><Label $color="#5c5c5c" $ls={-0.1}>Haze</Label></Stack>
    </Weather>
    <I w={29} h={29}>
      <path d="M0 1.500A1.500 1.500 0 0 1 1.500 0H14v14H0zM15 0h12.500A1.500 1.500 0 0 1 29 1.500V14H15zM0 15h14v14H1.500A1.500 1.500 0 0 1 0 27.500zM15 15h14v12.500a1.500 1.500 0 0 1-1.500 1.500H15z" fill="url(#win)" />
    </I>
    <SearchPill>
      <Stroke width="18" height="18" $w={2.2} $c="#222"><circle cx="8" cy="8" r="6.900" /><path d="m12.800 12.800 4.700 4.700" /></Stroke>
      <PillText $size={16} $color="#5c5c5c" $ls={0.15}>Search</PillText>
      <I w={31} h={31}>
        <path d="m0 31 4-3.500h6l5-3h11l4.500 2V31z" fill="#5cc4ea" />
        <path d="M12 28l6-4h7l5 5z" fill="#a8e4f8" />
        <path d="M5 5.500 8 1l1.500 1L12 2l2 4-.5 5.500 3.500 1L19 6l5-3.500L30.500 0 29 5l1 .5-2.500 4 .5 1.500-4 2.500h-.5l2.500 4-1 4 1.500 2.500-2 2-1.500-.5-1-4-2.500-3q-4 1.500-6.500.5l-5 .5-1.500 2 1.500 3-2 1L3.500 20l2-3.500L8 15l.5-5L10 7 7 8z" fill="#74caf0" />
        <path d="m19.500 11.500 3-6L29 2M21 12.500l6.500-4.500M8 4l3 1 1 7 6 3.500" fill="none" stroke="#4aa8d6" strokeWidth=".8" />
        <path d="M11 14q5 3 10 0l2 3q-6 2.500-12 0z" fill="#b4e6fa" />
      </I>
    </SearchPill>
    <Apps>
      {apps.map((a, i) => (
        <AppButton key={i} $on={a.on}>
          {a.icon}
          {a.run && <Running $on={a.on} />}
          {a.badge && <Badge $kind={a.badge[0]}>{a.badge[1]}</Badge>}
        </AppButton>
      ))}
    </Apps>
    <Tray>
      <TraySlot $w={40}><Stroke width="14" height="8" $w={1.8}><path d="m.8 7.200 6.200-6 6.200 6" /></Stroke></TraySlot>
      <TraySlot $w={40}>
        <I w={20} h={17}>
          <path d="M8 13H4a3.500 3.500 0 0 1-.3-7A5.500 5.500 0 0 1 14 3.500 4 4 0 0 1 16.500 7" fill="#aaa" stroke="#333" strokeWidth="1.400" />
          <path d="M2 11q4-6 8-1" fill="#eee" />
          <circle cx="14.500" cy="11.500" r="5.500" fill="#fce100" />
          <path d="M14.500 8.500v4M14.500 13.500v1.300" stroke="#222" strokeWidth="1.400" />
        </I>
      </TraySlot>
      <TraySlot $w={40}>
        <Stroke width="20" height="20" $w={1.4}>
          <path d="M.8 9A9 9 0 0 1 18 5.500M18.500 1v5h-5M8 19.200A9 9 0 0 1 1.500 14M1.500 19v-5h5" />
          <circle cx="15" cy="15" r="5" fill="#0078d4" stroke="none" />
        </Stroke>
      </TraySlot>
      <TraySlot $w={40}>
        <Stroke width="20" height="16" $w={1.5}>
          <path d="M.7 6.500a13 13 0 0 1 18.600 0M3.700 9.300a9 9 0 0 1 12.600 0M6.500 12a5 5 0 0 1 7 0" /><circle cx="10" cy="13.800" r="1.300" fill="#1b1b1b" />
        </Stroke>
      </TraySlot>
      <TraySlot $w={20}>
        <Stroke width="20" height="16" $w={1.4}>
          <path d="M1 5.500h3L8.500 1.300v13.400L4 10.500H1zM11.500 5.500q2 2.500 0 5M14 3.300q4 4.700 0 9.400M16.500 1.200q6 6.800 0 13.600" />
        </Stroke>
      </TraySlot>
      <TraySlot $w={40}>
        <Stroke width="20" height="16" $w={1.5}>
          <rect x="1.500" y="4" width="15.500" height="10.500" rx="2.500" /><path d="M18.700 7.500v3.500" strokeWidth="2.500" />
          <path d="M7 6.500h7.500V12H4v-2z" fill="#1b1b1b" stroke="none" /><path d="M4-.5 0 5.500h2.500L1.500 10 6.500 4H4z" fill="#1b1b1b" stroke="#d8d9dc" strokeWidth=".6" />
        </Stroke>
      </TraySlot>
      <Clock $right><Label $ls={0}>11:58 AM</Label><Label $ls={-0.1}>1/26/2025</Label></Clock>
      <I w={17} h={19}>
        <path d="M1.500 13.500V7.500a7 7 0 0 1 14 0v6l1.500 2.500H0zM5.500 16.500h6a3 2.500 0 0 1-6 0z" fill="#0a3f94" />
      </I>
    </Tray>
  </Taskbar>
);

export default function App() {
  return (
    <>
      <Global />
      <Screen>
        <Defs />
        <Desktop>
          <ExplorerWindow />
          <BrowserWindow />
          <TaskbarStrip />
        </Desktop>
        <Ink width="2041" height="1164" viewBox="0 0 2041 1164">
          <path d="M1290 306.500Q1420 249 1560 193.500T1675 150L1773 112 1857 80.500 1913 60Q1990 32 2044 17" fill="none" stroke="#e81e1e" strokeWidth="5" strokeLinecap="round" strokeLinejoin="round" />
        </Ink>
      </Screen>
    </>
  );
}
